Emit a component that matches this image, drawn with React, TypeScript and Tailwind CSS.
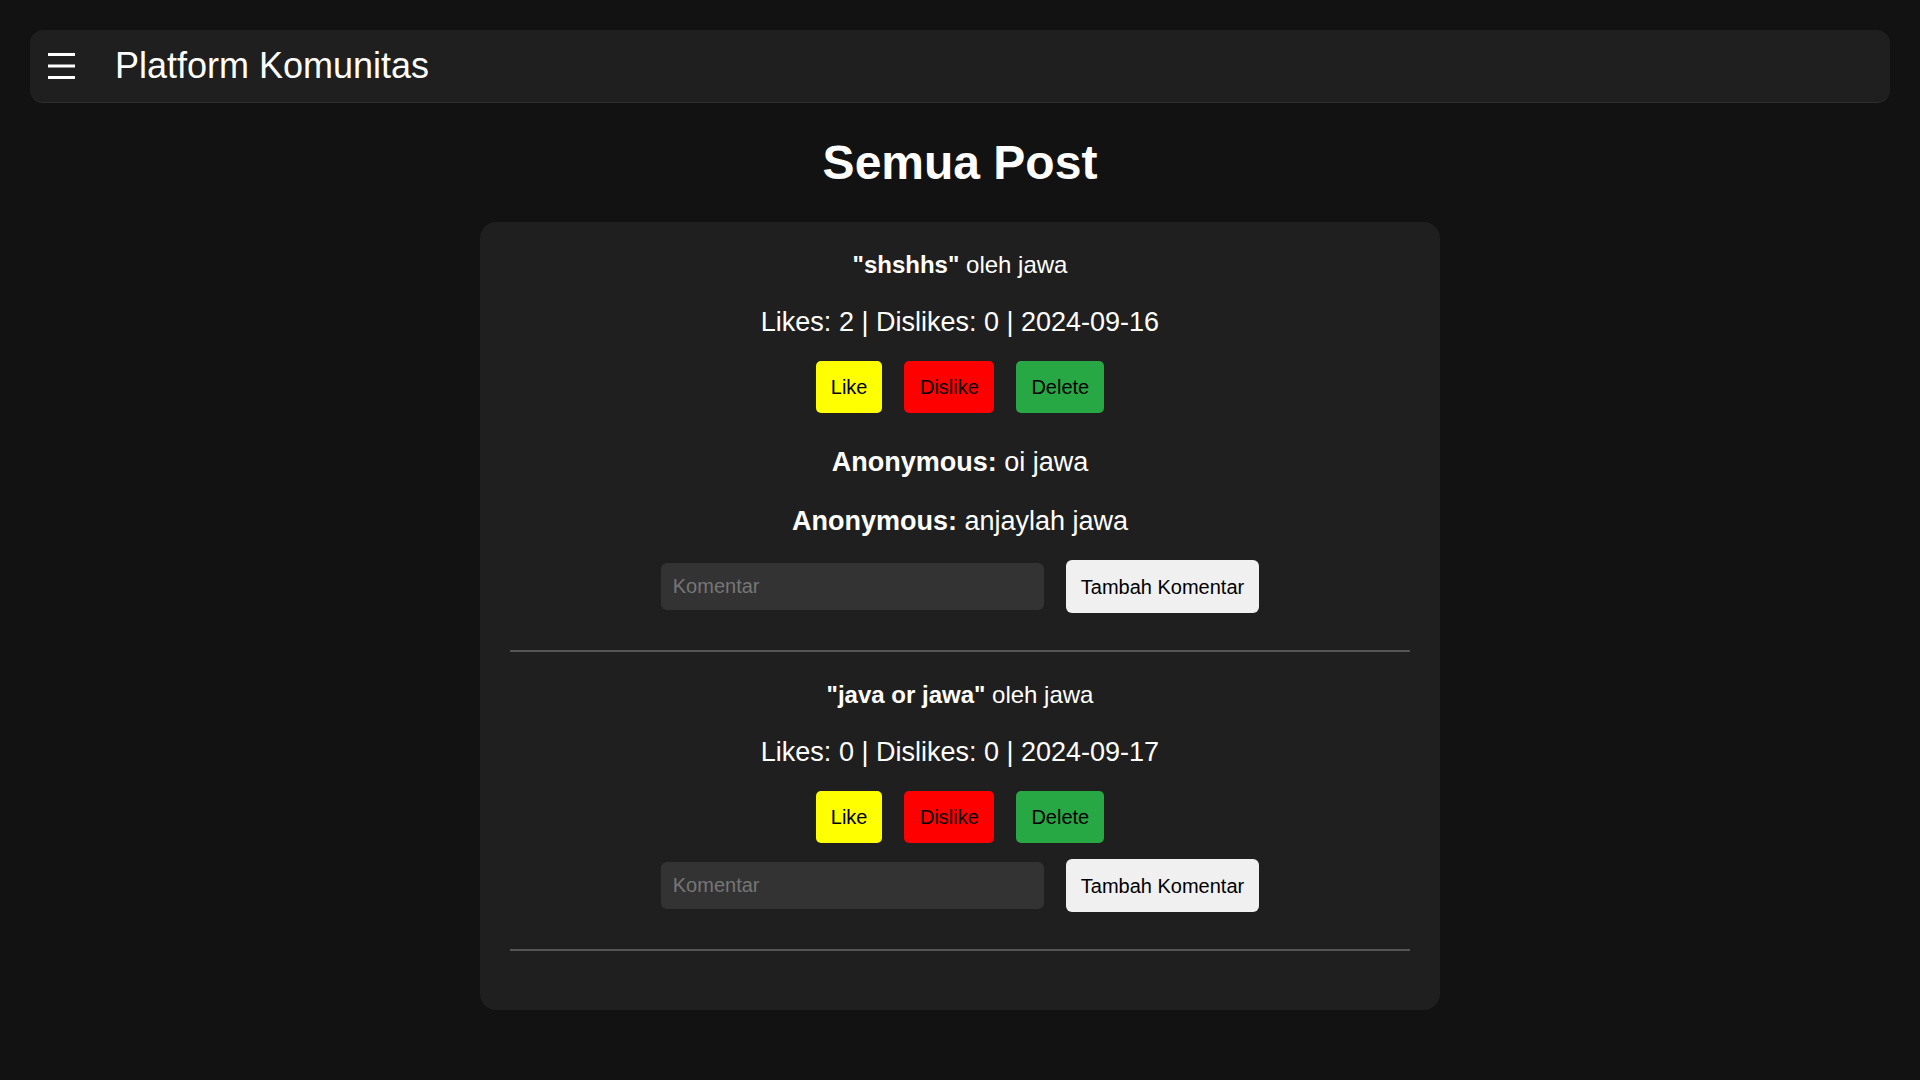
import React, { useState } from 'react';

type Comment = { author: string; text: string };
type Post = { id: number; title: string; author: string; likes: number; dislikes: number; date: string; comments: Comment[] };

const POSTS: Post[] = [
  {
    id: 1,
    title: 'shshhs',
    author: 'jawa',
    likes: 2,
    dislikes: 0,
    date: '2024-09-16',
    comments: [
      { author: 'Anonymous', text: 'oi jawa' },
      { author: 'Anonymous', text: 'anjaylah jawa' },
    ],
  },
  { id: 2, title: 'java or jawa', author: 'jawa', likes: 0, dislikes: 0, date: '2024-09-17', comments: [] },
];

const MenuIcon: React.FC = () => (
  <svg width="27" height="26" viewBox="0 0 27 26" fill="#ffffff">
    <rect x="0" y="0" width="27" height="3" />
    <rect x="0" y="11.5" width="27" height="3" />
    <rect x="0" y="23" width="27" height="3" />
  </svg>
);

const PostItem: React.FC<{ post: Post }> = ({ post }) => {
  const [draft, setDraft] = useState('');
  const hasComments = post.comments.length > 0;

  return (
    <div className="pt-[29px]">
      <div className="flex flex-col items-center text-white">
        {/* title */}
        <div className="text-[24px] leading-[28px]">
          <span className="font-bold">"{post.title}"</span> oleh {post.author}
        </div>

        <div className="mt-[28px] text-[27px] leading-[31px]">
          Likes: {post.likes} | Dislikes: {post.dislikes} | {post.date}
        </div>

        {/* actions */}
        <div className="mt-[23px] flex gap-[22px]">
          <button className="h-[52px] px-[15px] rounded-[5px] bg-[#ffff00] text-black text-[20px]">Like</button>
          <button className="h-[52px] px-[15.5px] rounded-[5px] bg-[#ff0000] text-black text-[20px]">Dislike</button>
          <button className="h-[52px] px-[15px] rounded-[5px] bg-[#28a745] text-black text-[20px]">Delete</button>
        </div>

        {hasComments && (
          <div className="mt-[34px] flex flex-col items-center gap-[28px]">
            {post.comments.map((c, i) => (
              <div key={i} className="text-[27px] leading-[31px]">
                <span className="font-bold">{c.author}:</span> {c.text}
              </div>
            ))}
          </div>
        )}

        {/* comment form */}
        <div className={`${hasComments ? 'mt-[23px]' : 'mt-[16px]'} flex items-center gap-[22px]`}>
          <input
            value={draft}
            onChange={(e) => setDraft(e.target.value)}
            placeholder="Komentar"
            className="w-[383px] h-[47px] rounded-[6px] bg-[#333333] px-[12px] text-[20px] text-white placeholder:text-[#767676] outline-none"
          />
          <button className="h-[53px] px-[15px] rounded-[6px] bg-[#f0f0f0] text-black text-[20px]">Tambah Komentar</button>
        </div>
      </div>
      <div className="mt-[37px] h-[2px] bg-[#555555]" />
    </div>
  );
};

const App: React.FC = () => {
  return (
    <div className="min-h-screen bg-[#121212] pt-[30px] pb-[60px] font-['Liberation_Sans',Arial,sans-serif]">
      {/* Navbar */}
      <header className="mx-[30px] h-[73px] rounded-[13px] bg-[#1f1f1f] border-b border-[#2e2e2e] flex items-center pl-[18px] gap-[40px]">
        <MenuIcon />
        <span className="text-[36px] text-white">Platform Komunitas</span>
      </header>

      <h1 className="mt-[32px] mb-[32px] text-center text-[48px] leading-[55px] font-bold text-white">Semua Post</h1>

      <div className="mx-auto w-[960px] rounded-[16px] bg-[#1f1f1f] px-[30px] pb-[59px]">
        {POSTS.map((p) => (
          <PostItem key={p.id} post={p} />
        ))}
      </div>
    </div>
  );
};

export default App;
